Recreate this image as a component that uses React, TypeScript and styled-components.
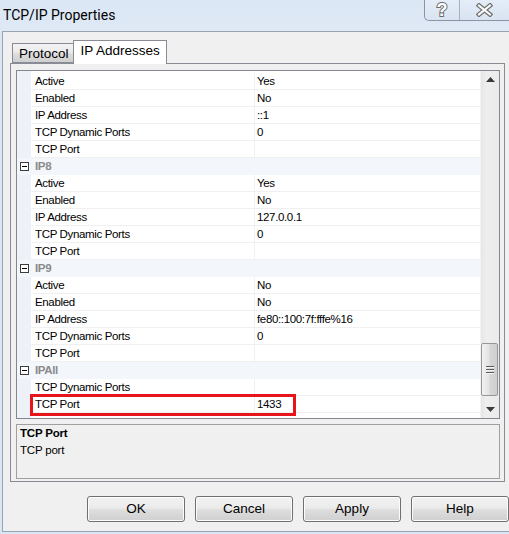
import React from "react";
import styled, { createGlobalStyle } from "styled-components";

const GlobalStyle = createGlobalStyle`
  html, body { margin: 0; padding: 0; background: #dae6f3; }
  body { width: 509px; height: 534px; overflow: hidden; }
  * { box-sizing: border-box; }
`;

const Window = styled.div`
  width: 509px;
  height: 534px;
  display: flex;
  flex-direction: column;
  background: #dae6f3;
  padding: 0 0 2px 2px;
  font-family: "Liberation Sans", Arial, sans-serif;
  color: #000;
`;

const TitleBar = styled.div`
  height: 31px;
  margin-left: -2px;
  display: flex;
  align-items: flex-start;
  background: linear-gradient(#dbe6f4, #dfe9f6);
`;

const Title = styled.div`
  font-family: Roboto, "Liberation Sans", sans-serif;
  font-size: 14px;
  line-height: 31px;
  padding-left: 3px;
  color: #000;
`;

const CaptionGroup = styled.div`
  margin-left: auto;
  display: flex;
  height: 21px;
  border: 1px solid #8a94a3;
  border-top: none;
  border-right: none;
  border-bottom-left-radius: 5px;
  background: linear-gradient(#e4edf8, #d9e4f2);
  overflow: hidden;
`;

const CaptionButton = styled.div<{ $w: number; $divider?: boolean }>`
  width: ${(p) => p.$w}px;
  height: 20px;
  display: flex;
  align-items: center;
  justify-content: center;
  border-left: ${(p) => (p.$divider ? "1px solid #a7b0bd" : "none")};
`;

const Client = styled.div`
  flex: 1;
  display: flex;
  flex-direction: column;
  background: #f0f0f0;
  border-top: 1px solid #9aa3b0;
  border-left: 1px solid #9aa3b0;
  border-bottom: 1px solid #9aa3b0;
  padding: 8px 0 9px 7px;
`;

const TabStrip = styled.div`
  display: flex;
  align-items: flex-end;
  height: 23px;
  padding-left: 2px;
  position: relative;
  z-index: 2;
`;

const Tab = styled.div<{ $active?: boolean }>`
  font-size: 13.5px;
  display: flex;
  align-items: center;
  border: 1px solid #898c95;
  ${(p) =>
    p.$active
      ? `
    height: 24px;
    margin-bottom: -1px;
    margin-left: -1px;
    padding: 0 6px 4px 7px;
    background: #fff;
    border-bottom: none;
  `
      : `
    height: 20px;
    padding: 1px 4px 0 6px;
    background: linear-gradient(#f3f3f3 0%, #ebebeb 45%, #dddddd 55%, #cfcfcf 100%);
  `}
`;

const Panel = styled.div`
  width: 495px;
  height: 419px;
  border: 1px solid #898c95;
  background: #f0f0f0;
  padding: 6px 4px 2px 5px;
  display: flex;
  flex-direction: column;
  gap: 5px;
`;

const Grid = styled.div`
  height: 349px;
  border: 1px solid #828790;
  background: #fff;
  display: flex;
`;

const Rows = styled.div`
  flex: 1;
  padding-top: 2px;
  display: flex;
  flex-direction: column;
  background: linear-gradient(to right, #eef2f8 14px, #fff 14px);
`;

const Row = styled.div`
  position: relative;
  display: flex;
  height: 17px;
  font-size: 11.5px;
  letter-spacing: -0.35px;
  line-height: 16px;
`;

const Gutter = styled.div`
  width: 14px;
  flex: none;
  display: flex;
  align-items: center;
  justify-content: center;
  padding-bottom: 1px;
`;

const NameCell = styled.div`
  width: 223px;
  flex: none;
  padding-left: 4px;
  border-bottom: 1px solid #f0f0f0;
  white-space: nowrap;
`;

const ValueCell = styled.div`
  flex: 1;
  padding-left: 2px;
  border-left: 1px solid #f0f0f0;
  border-bottom: 1px solid #f0f0f0;
  white-space: nowrap;
`;

const CategoryCell = styled.div`
  flex: 1;
  padding-left: 4px;
  background: #f3f6fb;
  border-bottom: 1px solid #f3f6fb;
  font-weight: bold;
  color: #8a8a8a;
`;

const CategoryRow = styled(Row)`
  background: #f3f6fb;
`;

const MinusBox = styled.div`
  width: 9px;
  height: 9px;
  border: 1px solid #3c3c3c;
  background: #fff;
  display: flex;
  align-items: center;
  justify-content: center;
  &::after {
    content: "";
    width: 5px;
    height: 1px;
    background: #000;
  }
`;

const Highlight = styled.div`
  position: absolute;
  left: 13px;
  top: -2px;
  width: 266px;
  height: 22px;
  border: 3px solid #e8141c;
  pointer-events: none;
`;

const ScrollBar = styled.div`
  width: 19px;
  flex: none;
  display: flex;
  flex-direction: column;
  background: linear-gradient(to right, #e6e6e6, #eeeeee 30%, #ebebeb);
  border-left: 1px solid #f4f4f4;
`;

const ScrollButton = styled.div`
  height: 17px;
  flex: none;
  display: flex;
  align-items: center;
  justify-content: center;
`;

const Track = styled.div`
  flex: 1;
  display: flex;
  flex-direction: column;
`;

const Thumb = styled.div`
  height: 53px;
  width: 17px;
  border: 1px solid #979797;
  border-radius: 2px;
  background: linear-gradient(to right, #f2f2f2, #e3e3e3 45%, #d6d6d6 55%, #cfcfcf);
  display: flex;
  flex-direction: column;
  align-items: center;
  justify-content: center;
  gap: 2px;
`;

const GripLine = styled.div`
  width: 8px;
  height: 1px;
  background: #5a5a5a;
  box-shadow: 0 1px 0 #f5f5f5;
`;

const Description = styled.div`
  height: 55px;
  border: 1px solid #a0a0a0;
  background: #f0f0f0;
  padding: 0 3px;
  font-size: 11.5px;
  letter-spacing: -0.2px;
  line-height: 17px;
`;

const DescTitle = styled.div`
  font-weight: bold;
`;

const DescText = styled.div``;

const ButtonRow = styled.div`
  display: flex;
  justify-content: flex-end;
  gap: 10px;
  margin-top: 14px;
`;

const DialogButton = styled.button`
  width: 98px;
  height: 26px;
  font-family: "Liberation Sans", Arial, sans-serif;
  font-size: 13.5px;
  color: #000;
  border: 1px solid #707070;
  border-radius: 3px;
  background: linear-gradient(#f2f2f2 0%, #ebebeb 45%, #dddddd 55%, #cfcfcf 100%);
  box-shadow: inset 0 0 0 1px #fcfcfc;
  padding: 0 0 1px;
`;

type Item = { cat: string } | { name: string; value: string; highlight?: boolean };

const items: Item[] = [
  { name: "Active", value: "Yes" },
  { name: "Enabled", value: "No" },
  { name: "IP Address", value: "::1" },
  { name: "TCP Dynamic Ports", value: "0" },
  { name: "TCP Port", value: "" },
  { cat: "IP8" },
  { name: "Active", value: "Yes" },
  { name: "Enabled", value: "No" },
  { name: "IP Address", value: "127.0.0.1" },
  { name: "TCP Dynamic Ports", value: "0" },
  { name: "TCP Port", value: "" },
  { cat: "IP9" },
  { name: "Active", value: "No" },
  { name: "Enabled", value: "No" },
  { name: "IP Address", value: "fe80::100:7f:fffe%16" },
  { name: "TCP Dynamic Ports", value: "0" },
  { name: "TCP Port", value: "" },
  { cat: "IPAll" },
  { name: "TCP Dynamic Ports", value: "" },
  { name: "TCP Port", value: "1433", highlight: true },
];

const HelpIcon = () => (
  <svg width="14" height="18" viewBox="0 0 14 18">
    <text
      x="7"
      y="15"
      textAnchor="middle"
      fontFamily="Liberation Sans, Arial, sans-serif"
      fontWeight="bold"
      fontSize="18"
      fill="#fff"
      stroke="#6b6b6b"
      strokeWidth="2"
      paintOrder="stroke"
    >
      ?
    </text>
  </svg>
);

const CloseIcon = () => (
  <svg width="17" height="14" viewBox="0 0 17 14">
    <path d="M3 2.5 L14 11.5 M14 2.5 L3 11.5" stroke="#6e6e6e" strokeWidth="4.5" strokeLinecap="square" />
    <path d="M3 2.5 L14 11.5 M14 2.5 L3 11.5" stroke="#fafafa" strokeWidth="2.2" strokeLinecap="square" />
  </svg>
);

const Arrow = ({ up }: { up?: boolean }) => (
  <svg width="9" height="5" viewBox="0 0 9 5">
    <path d={up ? "M0 5 L4.5 0 L9 5 Z" : "M0 0 L4.5 5 L9 0 Z"} fill="#3b3b3b" />
  </svg>
);

export default function App() {
  const thumbOffset = 255;
  return (
    <>
      <GlobalStyle />
      <Window>
        <TitleBar>
          <Title>TCP/IP Properties</Title>
          <CaptionGroup>
            <CaptionButton $w={34}>
              <HelpIcon />
            </CaptionButton>
            <CaptionButton $w={50} $divider>
              <CloseIcon />
            </CaptionButton>
          </CaptionGroup>
        </TitleBar>
        <Client>
          <TabStrip>
            <Tab>Protocol</Tab>
            <Tab $active>IP Addresses</Tab>
          </TabStrip>
          <Panel>
            <Grid>
              <Rows>
                {items.map((it, i) =>
                  "cat" in it ? (
                    <CategoryRow key={i}>
                      <Gutter>
                        <MinusBox />
                      </Gutter>
                      <CategoryCell>{it.cat}</CategoryCell>
                    </CategoryRow>
                  ) : (
                    <Row key={i}>
                      <Gutter />
                      <NameCell>{it.name}</NameCell>
                      <ValueCell>{it.value}</ValueCell>
                      {it.highlight && <Highlight />}
                    </Row>
                  )
                )}
              </Rows>
              <ScrollBar>
                <ScrollButton>
                  <Arrow up />
                </ScrollButton>
                <Track>
                  <Thumb style={{ marginTop: thumbOffset }}>
                    <GripLine />
                    <GripLine />
                    <GripLine />
                  </Thumb>
                </Track>
                <ScrollButton>
                  <Arrow />
                </ScrollButton>
              </ScrollBar>
            </Grid>
            <Description>
              <DescTitle>TCP Port</DescTitle>
              <DescText>TCP port</DescText>
            </Description>
          </Panel>
          <ButtonRow>
            <DialogButton>OK</DialogButton>
            <DialogButton>Cancel</DialogButton>
            <DialogButton>Apply</DialogButton>
            <DialogButton>Help</DialogButton>
          </ButtonRow>
        </Client>
      </Window>
    </>
  );
}
